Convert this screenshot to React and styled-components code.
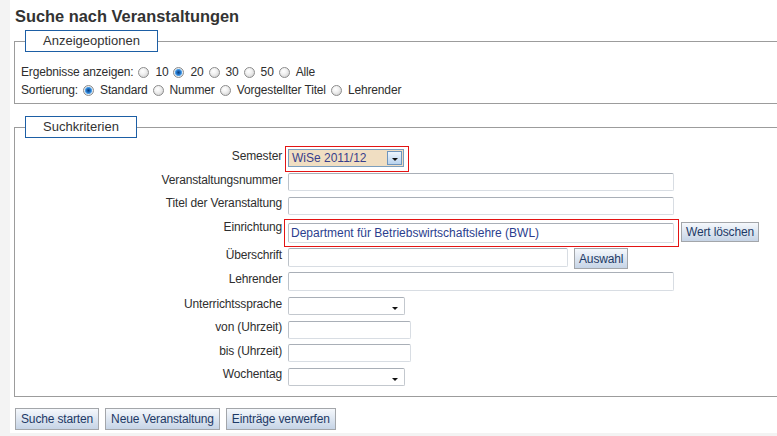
import React from "react";
import styled, { createGlobalStyle } from "styled-components";

const GlobalStyle = createGlobalStyle`
  html, body { margin: 0; padding: 0; background: #f3f3f3; overflow: hidden; }
  body { font-family: "Liberation Sans", Arial, sans-serif; }
  * { box-sizing: border-box; }
`;

const Page = styled.div`
  margin-left: 10px;
  width: 767px;
  height: 433px;
  background: #fff;
  overflow: hidden;
  padding-left: 4px;
`;

const Title = styled.h1`
  margin: 0 0 4px;
  padding: 6px 0 0 1px;
  font-size: 16.4px;
  line-height: 20px;
  font-weight: bold;
  color: #333;
`;

const Fieldset = styled.fieldset`
  margin: ${(p) => p.$mt || 0}px -40px 0 0;
  padding: ${(p) => p.$pad};
  border: 1px solid #9c9c9c;
  min-width: 0;
`;

const Legend = styled.legend`
  margin-left: 4px;
  padding: 0 17px;
  border: 1px solid #1d5fa5;
  font-size: 13px;
  line-height: 20px;
  color: #333;
`;

const OptRow = styled.div`
  display: flex;
  align-items: center;
  height: 18px;
  font-size: 12px;
  letter-spacing: -0.15px;
  color: #2e2e2e;
  white-space: nowrap;
`;

const Radio = styled.span`
  display: inline-block;
  width: 11px;
  height: 11px;
  margin: 0 6px 0 5px;
  border-radius: 50%;
  border: 1px solid #8c8c8c;
  background: ${(p) =>
    p.$on
      ? "radial-gradient(circle at 50% 50%, #0b3f7a 0, #1f6fc4 2px, #5eaef0 3.4px, #e8eef4 3.8px, #c9cfd6 100%)"
      : "radial-gradient(circle at 40% 35%, #ffffff 0, #f0f0f0 40%, #c8c8c8 100%)"};
`;

const Form = styled.div`
  display: flex;
  flex-direction: column;
`;

const FormRow = styled.div`
  display: grid;
  grid-template-columns: 261px 1fr;
  column-gap: 6px;
  align-items: start;
  height: ${(p) => p.$h}px;
`;

const Label = styled.div`
  text-align: right;
  font-size: 12px;
  line-height: 14px;
  letter-spacing: -0.15px;
  color: #2e2e2e;
  white-space: nowrap;
  margin-top: ${(p) => p.$mt || 0}px;
`;

const Field = styled.div`
  display: flex;
  align-items: flex-start;
  margin-top: ${(p) => p.$mt || 0}px;
`;

const Highlight = styled.div`
  display: flex;
  align-items: flex-start;
  border: 1px solid #e31414;
  padding: ${(p) => p.$pad};
  margin-left: -${(p) => p.$ml}px;
`;

const TextInput = styled.input`
  width: ${(p) => p.$w}px;
  height: ${(p) => p.$h || 18}px;
  margin: 0;
  padding: 0 2px;
  border: 1px solid #d8dde3;
  border-top-color: #a9afb7;
  border-left-color: #bcc2c9;
  border-radius: 2px;
  background: #fff;
  font-family: "Liberation Sans", Arial, sans-serif;
  font-size: 12px;
  color: #2b3e8e;
  outline: none;
`;

const SelectBox = styled.div`
  display: flex;
  align-items: center;
  width: ${(p) => p.$w}px;
  height: 18px;
  border: 1px solid ${(p) => (p.$tan ? "#7b9ebd" : "#c3c8ce")};
  border-top-color: ${(p) => (p.$tan ? "#7b9ebd" : "#a9afb7")};
  border-radius: ${(p) => (p.$tan ? 0 : 2)}px;
  background: ${(p) => (p.$tan ? "#f0dec2" : "#fff")};
  font-size: 12px;
  color: #383e8c;
  padding-left: 3px;
`;

const SelectText = styled.span`
  flex: 1;
  white-space: nowrap;
`;

const Caret = styled.span`
  width: 0;
  height: 0;
  border-left: ${(p) => p.$s}px solid transparent;
  border-right: ${(p) => p.$s}px solid transparent;
  border-top: ${(p) => p.$s}px solid #111;
`;

const PlainCaret = styled(Caret)`
  margin: 4px 6px 0 0;
`;

const DropButton = styled.span`
  display: flex;
  align-items: center;
  justify-content: center;
  width: 15px;
  height: 14px;
  margin-right: 1px;
  border: 1px solid #6f95bd;
  background: linear-gradient(#eef5fc, #b9d3ee);
  padding-top: 2px;
`;

const Button = styled.button`
  height: ${(p) => p.$h || 22}px;
  margin: ${(p) => p.$m || 0};
  padding: 0 ${(p) => p.$px || 5}px;
  border: 1px solid #a3a6aa;
  background: linear-gradient(#f5f8fc, #c6d4e6);
  font-family: "Liberation Sans", Arial, sans-serif;
  font-size: 12px;
  letter-spacing: -0.15px;
  color: #1d3966;
  white-space: nowrap;
  cursor: pointer;
`;

const ButtonBar = styled.div`
  display: flex;
  gap: 6px;
  margin-top: 11px;
  padding-left: 1px;
`;

const Option = ({ on, children }) => (
  <>
    <Radio $on={on} />
    {children}
  </>
);

const Select = ({ w }) => (
  <SelectBox $w={w}>
    <SelectText />
    <PlainCaret $s={3} />
  </SelectBox>
);

export default function App() {
  return (
    <>
      <GlobalStyle />
      <Page>
        <Title>Suche nach Veranstaltungen</Title>

        <Fieldset $pad="11px 0 4px 6px">
          <Legend>Anzeigeoptionen</Legend>
          <OptRow>
            Ergebnisse anzeigen:
            <Option>10</Option>
            <Option on>20</Option>
            <Option>30</Option>
            <Option>50</Option>
            <Option>Alle</Option>
          </OptRow>
          <OptRow>
            Sortierung:
            <Option on>Standard</Option>
            <Option>Nummer</Option>
            <Option>Vorgestellter Titel</Option>
            <Option>Lehrender</Option>
          </OptRow>
        </Fieldset>

        <Fieldset $mt={12} $pad="8px 0 10px 6px">
          <Legend>Suchkriterien</Legend>
          <Form>
            <FormRow $h={27}>
              <Label $mt={3}>Semester</Label>
              <Field>
                <Highlight $ml={3} $pad="2px 4px 4px 2px">
                  <SelectBox $w={116} $tan>
                    <SelectText>WiSe 2011/12</SelectText>
                    <DropButton>
                      <Caret $s={3} />
                    </DropButton>
                  </SelectBox>
                </Highlight>
              </Field>
            </FormRow>

            <FormRow $h={24}>
              <Label>Veranstaltungsnummer</Label>
              <Field>
                <TextInput $w={386} />
              </Field>
            </FormRow>

            <FormRow $h={22}>
              <Label $mt={-1}>Titel der Veranstaltung</Label>
              <Field>
                <TextInput $w={386} />
              </Field>
            </FormRow>

            <FormRow $h={29}>
              <Label $mt={1}>Einrichtung</Label>
              <Field>
                <Highlight $ml={4} $pad="3px 4px 3px 3px">
                  <TextInput
                    $w={386}
                    $h={20}
                    defaultValue="Department für Betriebswirtschaftslehre (BWL)"
                  />
                </Highlight>
                <Button $h={20} $m="3px 0 0 2px" $px={4}>
                  Wert löschen
                </Button>
              </Field>
            </FormRow>

            <FormRow $h={24}>
              <Label>Überschrift</Label>
              <Field>
                <TextInput $w={280} $h={19} />
                <Button $h={21} $m="0 0 0 6px" $px={4}>
                  Auswahl
                </Button>
              </Field>
            </FormRow>

            <FormRow $h={24}>
              <Label>Lehrender</Label>
              <Field>
                <TextInput $w={386} $h={19} />
              </Field>
            </FormRow>

            <FormRow $h={24}>
              <Label $mt={1}>Unterrichtssprache</Label>
              <Field $mt={1}>
                <Select w={117} />
              </Field>
            </FormRow>

            <FormRow $h={24}>
              <Label>von (Uhrzeit)</Label>
              <Field $mt={1}>
                <TextInput $w={123} />
              </Field>
            </FormRow>

            <FormRow $h={24}>
              <Label>bis (Uhrzeit)</Label>
              <Field>
                <TextInput $w={123} />
              </Field>
            </FormRow>

            <FormRow $h={18}>
              <Label $mt={-1}>Wochentag</Label>
              <Field>
                <Select w={117} />
              </Field>
            </FormRow>
          </Form>
        </Fieldset>

        <ButtonBar>
          <Button>Suche starten</Button>
          <Button>Neue Veranstaltung</Button>
          <Button>Einträge verwerfen</Button>
        </ButtonBar>
      </Page>
    </>
  );
}
